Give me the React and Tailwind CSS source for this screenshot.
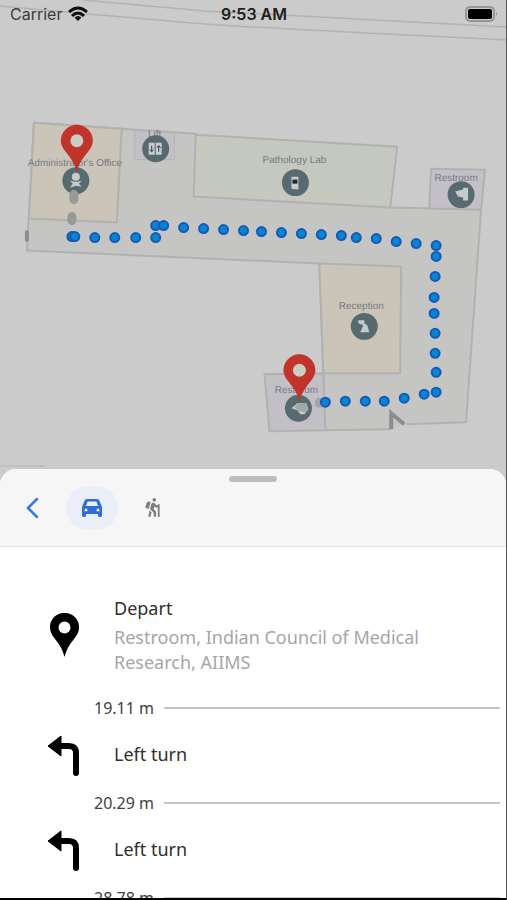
import React, { useState } from 'react';
import { FaHiking } from 'react-icons/fa';

const routeDots = [
  [72, 237], [75, 237], [95, 238], [115, 238], [136, 238], [156, 238], [156, 226], [164, 226],
  [184, 228], [204, 229], [224, 230], [244, 231], [262, 232], [282, 233], [302, 234], [322, 235],
  [342, 236], [357, 238], [377, 239], [397, 242], [417, 244], [437, 246], [437, 257], [436, 277],
  [435, 298], [435, 314], [436, 334], [436, 354], [437, 373], [437, 393], [425, 395], [405, 399],
  [385, 402], [366, 402], [346, 402], [326, 403],
];

const steps = [
  { id: 1, distance: '19.11 m', label: 'Left turn' },
  { id: 2, distance: '20.29 m', label: 'Left turn' },
  { id: 3, distance: '28.78 m', label: 'Left turn' },
];

function MapPin({ x, y }) {
  return (
    <g transform={`translate(${x} ${y})`}>
      <path
        d="M0 0C-1-8-4-13-12-23C-15-27-16-30-16-33A16 16 0 0 1 16-33C16-30 15-27 12-23C4-13 1-8 0 0Z"
        fill="#c1342c"
      />
      <circle cx="0" cy="-33" r="6.500" fill="#cbcbc8" />
    </g>
  );
}

function FloorMap() {
  return (
    <svg viewBox="0 0 507 490" className="block w-full" role="img" aria-label="Floor map">
      <rect width="507" height="490" fill="#cbcbcb" />

      {/* Roads */}
      <g fill="none" stroke="#b2b2b0" strokeWidth="1.500">
        <path d="M83 0L205 11L507 27" />
        <path d="M0 6L88 14L205 24Q240 27 507 40" />
        <path d="M0 467H45" stroke="#bdbdbd" />
      </g>

      {/* Building and rooms */}
      <g stroke="#b1b2af" strokeWidth="2" strokeLinejoin="round">
        <path d="M34 123L196 134L398 147L391 208L482 210L467 423L405 425L391 430L326 431L320 264L27 251Z" fill="#c5c6c4" stroke="none" />
        <path d="M391 430L326 431L320 264L27 251L34 123L196 134M391 208L482 210L467 423L407 425" fill="none" />
        <path d="M34 123L122 129L117 223L29 219Z" fill="#cac4b9" />
        <path d="M196 135L398 147L391 208L194 197Z" fill="#c4c8be" />
        <path d="M432 169L486 170L482 210L430 209Z" fill="#c3bfc6" />
        <path d="M320 264L402 267L401 374L324 374Z" fill="#cac4b9" />
        <path d="M265 375L324 374L326 431L270 432Z" fill="#c3bfc6" />
      </g>
      <path d="M135 131L175 133V160H135Z" fill="#c3bfc6" stroke="#b4b2b6" />
      <path d="M27 231V242" stroke="#8c8e8f" strokeWidth="4" />
      <path d="M392 430V414L405 425" fill="none" stroke="#8b8d8e" strokeWidth="4" />

      <g
        fill="#787b7f"
        fontFamily="Liberation Sans, Arial, sans-serif"
        fontSize="10"
        textAnchor="middle"
        textRendering="geometricPrecision"
      >
        <text x="75" y="166">Administrator's Office</text>
        <text x="155" y="137">Lift</text>
        <text x="295" y="163">Pathology Lab</text>
        <text x="457" y="181">Restroom</text>
        <text x="362" y="310">Reception</text>
        <text x="297" y="394">Restroom</text>
      </g>

      <g fill="#566a70">
        <circle cx="76" cy="181" r="13.500" />
        <circle cx="156" cy="149" r="13.500" />
        <circle cx="296" cy="183" r="13.500" />
        <circle cx="462" cy="195" r="13.500" />
        <circle cx="365" cy="327" r="13.500" />
        <circle cx="299" cy="409" r="13.500" />
      </g>

      <g fill="#c5cccc">
        <circle cx="76" cy="177" r="4" />
        <path d="M70 181L75 182H78L82 181L79 184L82 187L76 186L70 188L73 184Z" />
        <path d="M149 143H155V155H149ZM156 143H162V155H156Z" />
        <path d="M292 177H299V190L292 189Z" />
        <path d="M456 192L464 190V188H469V201H464V198L459 197Z" />
        <path d="M359 321H365V324L368 326L370 333H361L364 326L359 324Z" />
        <path d="M292 409L298 404L307 404L309 410L305 415H301L298 411Z" />
      </g>
      <path d="M293 180H298V184H293Z" fill="#202527" />
      <path d="M152 146V152M150 150L152 152L154 150M159 152V146M157 148L159 146L161 148" fill="none" stroke="#353d40" />
      <path d="M295 408L299 404H307L309 410L306 413L300 412Z" fill="#a3a7a7" />

      <g stroke="#999a98" strokeWidth="9" strokeLinecap="round">
        <path d="M74 195V200M72 217V221" />
      </g>
      <path d="M320 403V404" stroke="#a5a5a5" strokeWidth="9" strokeLinecap="round" />

      <MapPin x={77} y={174} />
      <MapPin x={300} y={404} />

      <g fill="#0884d5" stroke="#1659b2" strokeWidth="2">
        {routeDots.map(([x, y]) => (
          <circle key={`${x}-${y}`} cx={x} cy={y} r="4.500" />
        ))}
      </g>
    </svg>
  );
}

function StatusBar() {
  return (
    <header className="absolute inset-x-0 top-0 grid grid-cols-3 items-center pl-[10px] pr-2 h-[27px] font-['Inter',sans-serif] text-[#3c3c3c]">
      <div className="flex items-center gap-[6px] text-base">
        <span>Carrier</span>
        <svg width="20" height="16" viewBox="0 0 20 16" fill="none" stroke="#111" strokeWidth="3" aria-hidden="true">
          <path d="M1 6Q10-2 19 6" />
          <path d="M4 10Q10 4 16 10" />
          <path d="M10 15L6.500 11.500Q10 8.500 13.500 11.500Z" fill="#111" stroke="none" />
        </svg>
      </div>
      <span className="text-center text-base font-semibold text-[#202020]">9:53 AM</span>
      <svg className="justify-self-end" width="33" height="16" viewBox="0 0 33 16" aria-hidden="true">
        <rect x="1" y="1" width="28" height="14" rx="4" fill="none" stroke="#969696" strokeWidth="2" />
        <rect x="3" y="3" width="24" height="10" rx="2" fill="#000" />
        <path d="M31 6Q33 8 31 10Z" fill="#969696" />
      </svg>
    </header>
  );
}

function LeftTurnIcon() {
  return (
    <svg width="34" height="42" viewBox="0 0 34 42" aria-hidden="true">
      <path d="M1 11L14 1V21Z" fill="#000" stroke="#000" strokeLinejoin="round" />
      <path d="M12 11H22Q29 11 29 18V38" fill="none" stroke="#000" strokeWidth="6" strokeLinecap="round" />
    </svg>
  );
}

function Step({ distance, label }) {
  return (
    <li>
      <div className="flex items-center gap-[10px] pl-[94px] pr-[6px] h-6 text-base text-[#404040]">
        <span>{distance}</span>
        <div className="flex-1 h-[2px] bg-[#c4c4c4]"></div>
      </div>
      <div className="flex items-center pl-[47px] h-[71px]">
        <div className="w-[67px]">
          <LeftTurnIcon />
        </div>
        <span className="pb-1 text-lg text-[#303030]">{label}</span>
      </div>
    </li>
  );
}

export default function App() {
  const [mode, setMode] = useState('car');

  return (
    <div className="h-screen overflow-hidden flex flex-col border-r border-b-2 border-r-[#555] border-b-black bg-white font-['Noto_Sans',sans-serif]">
      <main className="relative flex-1 min-h-0 flex flex-col">
        <div className="shrink-0">
          <FloorMap />
        </div>
        <StatusBar />

        <section className="relative -mt-5 flex-1 min-h-0 overflow-hidden rounded-t-2xl bg-white">
          <div className="relative flex items-center h-[78px] pl-[14px] border-b border-[#e3e3e3] bg-[#f6f6f6]">
            <div className="absolute top-[7px] left-1/2 -translate-x-1/2 w-12 h-[6px] rounded-full bg-[#bdbdbd]"></div>
            <button type="button" aria-label="Back" className="w-9 h-11 flex items-center justify-center">
              <svg width="14" height="22" viewBox="0 0 14 22" fill="none" stroke="#3478eb" strokeWidth="2.500" aria-hidden="true">
                <path d="M12 2L3 11L12 20" strokeLinecap="round" strokeLinejoin="round" />
              </svg>
            </button>
            <button
              type="button"
              aria-label="By car"
              aria-pressed={mode === 'car'}
              onClick={() => setMode('car')}
              className={`ml-4 w-[52px] h-11 rounded-full flex items-center justify-center ${mode === 'car' ? 'bg-[#e9eef9] text-[#2f6bdc]' : 'text-[#7d7d7d]'}`}
            >
              <svg width="20" height="18" viewBox="0 0 20 18" fill="currentColor" aria-hidden="true">
                <path
                  d="M5 0H15Q17 0 17.500 2L20 8V16.500Q20 18 18.500 18H17.500Q16 18 16 16.500V15H4V16.500Q4 18 2.500 18H1.500Q0 18 0 16.500V8L2.500 2Q3 0 5 0ZM5.500 2.500L4 7H16L14.500 2.500ZM4 9.500A1.500 1.500 0 1 0 4 12.500A1.500 1.500 0 1 0 4 9.500ZM16 9.500A1.500 1.500 0 1 0 16 12.500A1.500 1.500 0 1 0 16 9.500Z"
                  fillRule="evenodd"
                />
              </svg>
            </button>
            <button
              type="button"
              aria-label="On foot"
              aria-pressed={mode === 'walk'}
              onClick={() => setMode('walk')}
              className={`ml-2 w-[52px] h-11 rounded-full flex items-center justify-center ${mode === 'walk' ? 'bg-[#e9eef9] text-[#2f6bdc]' : 'text-[#7d7d7d]'}`}
            >
              <FaHiking size={19} />
            </button>
          </div>

          <div className="flex items-center pl-[50px] pr-12 pt-12 pb-[21px]">
            <div className="w-16 shrink-0">
              <svg width="29" height="44" viewBox="0 0 29 44" aria-hidden="true">
                <path
                  d="M14.500 0A14 14 0 0 0 0 14.500C0 19 2 22 5 26Q12 34 14.500 44Q17 34 24 26C27 22 29 19 29 14.500A14 14 0 0 0 14.500 0ZM14.500 8.500A6 6 0 1 1 14.500 20.500A6 6 0 1 1 14.500 8.500Z"
                  fillRule="evenodd"
                />
              </svg>
            </div>
            <div>
              <h2 className="text-lg leading-[26px] text-[#303030]">Depart</h2>
              <p className="mt-1 text-lg leading-[25px] text-[#a6a6a6]">
                Restroom, Indian Council of Medical Research, AIIMS
              </p>
            </div>
          </div>

          <ol>
            {steps.map((step) => (
              <Step key={step.id} distance={step.distance} label={step.label} />
            ))}
          </ol>
        </section>
      </main>
    </div>
  );
}
